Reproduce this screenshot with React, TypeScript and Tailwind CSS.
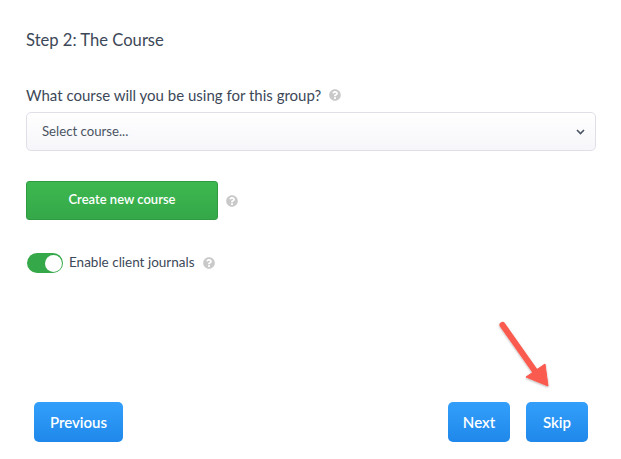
import { FaQuestionCircle } from "react-icons/fa";

const HelpIcon = () => <FaQuestionCircle className="h-3 w-3 text-[#c9c9c9]" />;

const BlueButton = ({ label, width }: { label: string; width: string }) => (
  <button className={`h-10 rounded-[5px] bg-gradient-to-b from-[#339ffb] to-[#1f88ea] text-[15px] font-semibold text-white ${width}`}>
    {label}
  </button>
);

export default function App() {
  return (
    <div className="relative flex h-[459px] w-[621px] flex-col overflow-hidden bg-white font-['Lato',sans-serif] text-[#3c4858]">
      <div className="px-[26px] pt-[29px]">
        <h2 className="text-[16.6px] leading-[22px]">Step 2: The Course</h2>

        <div className="mt-[33px] flex h-[22px] items-center gap-[8px]">
          <label className="text-[15px] leading-[22px]">What course will you be using for this group?</label>
          <HelpIcon />
        </div>

        <div className="mt-[6px] flex h-[39px] w-[570px] items-center justify-between rounded-[5px] border border-[#dfdfe8] bg-gradient-to-b from-white to-[#f6f6fa] pl-[15px] pr-[10px]">
          <span className="text-[13.2px] text-[#4a5462]">Select course...</span>
          <svg width="9" height="6" viewBox="0 0 9 6" fill="none" stroke="#4a5462" strokeWidth="1.6">
            <path d="M1 1l3.5 3.5L8 1" />
          </svg>
        </div>

        <div className="mt-[30px] flex items-center gap-[8px]">
          <button className="h-[39px] w-[192px] rounded-[3px] border border-[#2f9a42] bg-gradient-to-b from-[#3db84f] to-[#35a849] pb-[1px] text-[13px] font-semibold text-white">
            Create new course
          </button>
          <HelpIcon />
        </div>

        <div className="mt-[32px] flex h-[22px] items-center pl-[1px]">
          <div className="flex h-[20px] w-[36px] items-center justify-end rounded-full bg-[#35a849] pr-[1px]">
            <div className="h-[17px] w-[17px] rounded-full bg-white" />
          </div>
          <span className="ml-[6px] pb-[2px] text-[13.5px]">Enable client journals</span>
          <span className="ml-[8px] flex"><HelpIcon /></span>
        </div>
      </div>

      <div className="mt-auto flex items-center justify-between pb-[17px] pl-[34px] pr-[33px]">
        <BlueButton label="Previous" width="w-[89px]" />
        <div className="flex gap-4">
          <BlueButton label="Next" width="w-[62px]" />
          <BlueButton label="Skip" width="w-[62px]" />
        </div>
      </div>

      <svg className="absolute left-[490px] top-[312px]" width="75" height="85" viewBox="0 0 75 85">
        <defs>
          <filter id="arrow-shadow" x="-20%" y="-20%" width="140%" height="140%">
            <feDropShadow dx="0" dy="1" stdDeviation="1" floodColor="#000" floodOpacity="0.3" />
          </filter>
        </defs>
        <g filter="url(#arrow-shadow)">
          <path d="M12.5 13L47 62" stroke="#fb5a4f" strokeWidth="6" strokeLinecap="round" />
          <path d="M36 65L55 52L58 74Z" fill="#fb5a4f" stroke="#fb5a4f" strokeWidth="1" strokeLinejoin="round" />
        </g>
      </svg>
    </div>
  );
}
